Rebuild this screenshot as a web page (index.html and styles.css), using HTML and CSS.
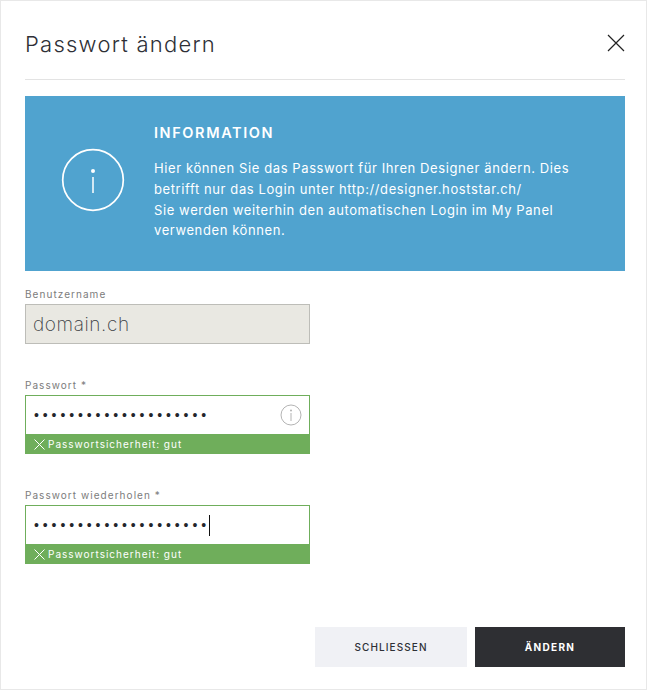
FILE: index.html
```html
<!DOCTYPE html>
<html lang="de">

<head>
  <meta charset="UTF-8">
  <title>Passwort ändern</title>
  <link rel="stylesheet" href="styles.css">
</head>

<body>
  <div class="modal">
    <div class="modal-head">
      <h1>Passwort ändern</h1>
      <svg class="close-icon" width="18" height="18" viewBox="0 0 18 18">
        <path d="M1 1L17 17M17 1L1 17" stroke="#222" stroke-width="1.2" fill="none"/>
      </svg>
    </div>

    <div class="info-box">
      <div class="info-icon">
        <svg width="64" height="64" viewBox="0 0 64 64">
          <circle cx="32" cy="32" r="30.3" stroke="#fff" stroke-width="1.7" fill="none"/>
          <circle cx="32" cy="23" r="2" fill="#fff"/>
          <path d="M32 29V45" stroke="#fff" stroke-width="1.5"/>
        </svg>
      </div>
      <div class="info-text">
        <h2>INFORMATION</h2>
        <p>Hier können Sie das Passwort für Ihren Designer ändern. Dies<br>
          betrifft nur das Login unter http://designer.hoststar.ch/<br>
          Sie werden weiterhin den automatischen Login im My Panel<br>
          verwenden können.</p>
      </div>
    </div>

    <div class="field field-first">
      <label>Benutzername</label>
      <div class="input input-disabled">domain.ch</div>
    </div>

    <div class="field">
      <label>Passwort *</label>
      <div class="input input-ok">
        <span class="dots">••••••••••••••••••••</span>
        <svg class="hint-icon" width="22" height="22" viewBox="0 0 22 22">
          <circle cx="11" cy="11" r="10" stroke="#b4b4b4" stroke-width="1" fill="none"/>
          <circle cx="11" cy="6.5" r="1" fill="#b4b4b4"/>
          <path d="M11 9V17" stroke="#b4b4b4" stroke-width="1"/>
        </svg>
      </div>
      <div class="strength">
        <svg width="11" height="11" viewBox="0 0 11 11">
          <path d="M.5 .5L10.5 10.5M10.5 .5L.5 10.5" stroke="#fff" stroke-width="1" fill="none"/>
        </svg>
        Passwortsicherheit: gut
      </div>
    </div>

    <div class="field">
      <label>Passwort wiederholen *</label>
      <div class="input input-ok">
        <span class="dots">••••••••••••••••••••</span><span class="caret"></span>
      </div>
      <div class="strength">
        <svg width="11" height="11" viewBox="0 0 11 11">
          <path d="M.5 .5L10.5 10.5M10.5 .5L.5 10.5" stroke="#fff" stroke-width="1" fill="none"/>
        </svg>
        Passwortsicherheit: gut
      </div>
    </div>

    <div class="modal-foot">
      <button class="btn btn-light">SCHLIESSEN</button>
      <button class="btn btn-dark">ÄNDERN</button>
    </div>
  </div>
</body>

</html>
```

FILE: styles.css
```css
*,
*::before,
*::after {
  margin: 0;
  padding: 0;
  box-sizing: border-box;
}
body {
  font-family: "Inter", "Liberation Sans", sans-serif;
  background: #fff;
}
.modal {
  width: 647px;
  height: 690px;
  border: 1px solid #e8e8e8;
  padding: 0 21px 0 24px;
}
.modal-head {
  display: flex;
  align-items: center;
  justify-content: space-between;
  height: 79px;
  border-bottom: 1px solid #e3e3e3;
  padding-top: 7px;
}
.modal-head h1 {
  font-size: 22px;
  font-weight: 300;
  letter-spacing: 1.25px;
  color: #2e3036;
}
.close-icon {
  margin-bottom: 1px;
}
.info-box {
  display: flex;
  height: 175px;
  margin-top: 16px;
  background: #50a3cf;
  color: #fff;
}
.info-icon {
  display: flex;
  align-self: center;
  width: 129px;
  padding-left: 36px;
  margin-bottom: 7px;
}
.info-text {
  padding-top: 27px;
}
.info-text h2 {
  font-size: 14.5px;
  font-weight: 600;
  letter-spacing: 1.6px;
  line-height: 20px;
  margin-bottom: 15px;
}
.info-text p {
  font-size: 13px;
  letter-spacing: 0.6px;
  line-height: 20.8px;
}
.field {
  width: 285px;
  margin-top: 34px;
}
.field-first {
  margin-top: 16px;
}
.field label {
  display: block;
  font-size: 10px;
  letter-spacing: 1.05px;
  line-height: 14px;
  color: #7c7c7c;
  margin-bottom: 3px;
}
.input {
  display: flex;
  align-items: center;
  height: 40px;
  padding: 0 7px;
  position: relative;
}
.input-disabled {
  background: #e9e8e2;
  border: 1px solid #bdbdb8;
  font-size: 19px;
  font-weight: 200;
  letter-spacing: 0.6px;
  color: #3c3f45;
}
.input-ok {
  height: 39px;
  border: 1px solid #6fae5b;
  border-bottom: 0;
}
.dots {
  font-family: "Liberation Sans", sans-serif;
  font-size: 14px;
  letter-spacing: 3.9px;
  color: #23252b;
  margin-left: 1px;
}
.caret {
  width: 1px;
  height: 21px;
  margin-left: -1px;
  background: #111;
}
.hint-icon {
  margin-left: auto;
  margin-right: 0;
}
.strength {
  display: flex;
  align-items: center;
  gap: 3px;
  height: 20px;
  padding-left: 9px;
  background: #6fae5b;
  color: #fff;
  font-size: 10px;
  letter-spacing: 1px;
}
.modal-foot {
  display: flex;
  justify-content: flex-end;
  gap: 8px;
  margin-top: 63px;
}
.btn {
  height: 40px;
  border: 0;
  font-family: inherit;
  font-size: 10px;
  letter-spacing: 1.1px;
}
.btn-light {
  width: 152px;
  background: #f0f1f5;
  color: #2e3036;
  font-weight: 500;
}
.btn-dark {
  width: 150px;
  background: #2e2f33;
  color: #fff;
  font-weight: 700;
  letter-spacing: 1.3px;
}
```
